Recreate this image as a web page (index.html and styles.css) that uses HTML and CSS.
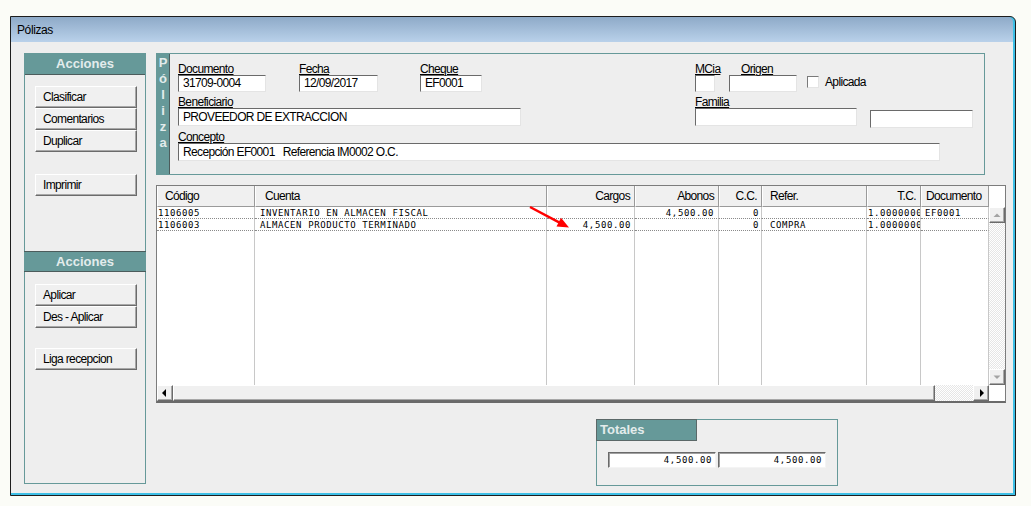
FILE: index.html
```html
<!DOCTYPE html>
<html lang="es">
<head>
  <meta charset="UTF-8" />
  <meta name="viewport" content="width=device-width, initial-scale=1.0"/>
  <title>Pólizas</title>
  <link rel="stylesheet" href="styles.css">
</head>
<body>
  <div class="window">
    <div class="titlebar">Pólizas</div>

    <div class="client">
      <!-- left action panel -->
      <div class="side">
        <div class="side-head">Acciones</div>
        <div class="btn-stack first">
          <button class="btn">Clasificar</button>
          <button class="btn">Comentarios</button>
          <button class="btn">Duplicar</button>
        </div>
        <div class="btn-stack solo">
          <button class="btn">Imprimir</button>
        </div>

        <div class="side-head second">Acciones</div>
        <div class="btn-stack after-head">
          <button class="btn">Aplicar</button>
          <button class="btn">Des - Aplicar</button>
        </div>
        <div class="btn-stack liga">
          <button class="btn">Liga recepcion</button>
        </div>
      </div>

      <div class="main">
        <!-- header of the voucher -->
        <div class="poliza">
          <div class="poliza-tab">
            <span>P</span><span>ó</span><span>l</span><span>i</span><span>z</span><span>a</span>
          </div>
          <div class="poliza-body">
            <div class="row row-1">
              <div class="field f-doc">
                <label>Documento</label>
                <div class="input">31709-0004</div>
              </div>
              <div class="field f-fecha">
                <label>Fecha</label>
                <div class="input">12/09/2017</div>
              </div>
              <div class="field f-cheque">
                <label>Cheque</label>
                <div class="input">EF0001</div>
              </div>
              <div class="field f-mcia">
                <label>MCia</label>
                <div class="input"></div>
              </div>
              <div class="field f-origen">
                <label>Origen</label>
                <div class="input"></div>
              </div>
              <div class="check">
                <span class="box"></span>
                <span>Aplicada</span>
              </div>
            </div>

            <div class="row row-2">
              <div class="field f-benef">
                <label>Beneficiario</label>
                <div class="input">PROVEEDOR DE EXTRACCION</div>
              </div>
              <div class="field f-familia">
                <label>Familia</label>
                <div class="input"></div>
              </div>
              <div class="field f-extra">
                <div class="input"></div>
              </div>
            </div>

            <div class="row row-3">
              <div class="field f-concepto">
                <label>Concepto</label>
                <div class="input">Recepción EF0001&nbsp;&nbsp; Referencia IM0002 O.C.</div>
              </div>
            </div>
          </div>
        </div>

        <!-- movements grid -->
        <div class="grid">
          <div class="grid-top">
            <div class="cols">
              <div class="hd">Código</div>
              <div class="hd hd-cuenta">Cuenta</div>
              <div class="hd right">Cargos</div>
              <div class="hd right">Abonos</div>
              <div class="hd right">C.C.</div>
              <div class="hd hd-refer">Refer.</div>
              <div class="hd right">T.C.</div>
              <div class="hd hd-doc">Documento</div>

              <div class="cell c-cod">1106005</div>
              <div class="cell c-cta">INVENTARIO EN ALMACEN FISCAL</div>
              <div class="cell c-num"></div>
              <div class="cell c-num c-abono">4,500.00</div>
              <div class="cell c-cc">0</div>
              <div class="cell c-ref"></div>
              <div class="cell c-tc">1.0000000</div>
              <div class="cell c-doc">EF0001</div>

              <div class="cell c-cod">1106003</div>
              <div class="cell c-cta">ALMACEN PRODUCTO TERMINADO</div>
              <div class="cell c-num">4,500.00</div>
              <div class="cell c-num c-abono"></div>
              <div class="cell c-cc">0</div>
              <div class="cell c-ref">COMPRA</div>
              <div class="cell c-tc">1.0000000</div>
              <div class="cell c-doc"></div>

              <div class="fill"></div><div class="fill"></div><div class="fill"></div><div class="fill"></div>
              <div class="fill"></div><div class="fill"></div><div class="fill"></div><div class="fill"></div>
            </div>

            <div class="vscroll">
              <div class="sbtn">
                <svg width="14" height="14"><polygon points="3.5,9 10.5,9 7,5.5" fill="#a3a3a3"/></svg>
              </div>
              <div class="track"></div>
              <div class="sbtn">
                <svg width="14" height="14"><polygon points="3.5,5.5 10.5,5.5 7,9" fill="#a3a3a3"/></svg>
              </div>
            </div>
          </div>

          <div class="hscroll">
            <div class="sbtn">
              <svg width="14" height="14"><polygon points="8,3 8,11 4,7" fill="#000"/></svg>
            </div>
            <div class="thumb"></div>
            <div class="track"></div>
            <div class="sbtn">
              <svg width="14" height="14"><polygon points="6,3 6,11 10,7" fill="#000"/></svg>
            </div>
            <div class="corner"></div>
          </div>

          <svg class="arrow" width="46" height="28">
            <line x1="4" y1="4" x2="34" y2="19.8" stroke="#f00" stroke-width="2.5"/>
            <polygon points="43,24.5 30.5,23.5 35,14.8" fill="#f00"/>
          </svg>
        </div>

        <!-- totals -->
        <div class="totales">
          <div class="totales-head">Totales</div>
          <div class="totales-row">
            <div class="total">4,500.00</div>
            <div class="total">4,500.00</div>
          </div>
        </div>
      </div>
    </div>
  </div>
</body>
</html>
```

FILE: styles.css
```css
* {
  box-sizing: border-box;
}

body {
  margin: 0;
  background: #fbfcf7;
  font-family: "Liberation Sans", Arial, sans-serif;
  font-size: 12px;
  letter-spacing: -0.65px;
  color: #000;
}

/* window frame */
.window {
  width: 1006px;
  height: 480px;
  margin: 16px 0 0 10px;
  padding: 0 2px 2px 0;
  background: #3dbfe6;
  border: 1px solid #1d1d1d;
  border-top-right-radius: 6px;
  display: flex;
  flex-direction: column;
}

.titlebar {
  height: 25px;
  padding: 2px 0 0 6px;
  line-height: 23px;
  background: linear-gradient(#8eaac8, #b9d1ea);
  border-top-right-radius: 5px;
  letter-spacing: -0.4px;
}

.client {
  flex: 1;
  background: #eeeeee;
  display: flex;
  align-items: flex-start;
  gap: 10px;
  padding: 11px 0 0 13px;
}

/* left panel */
.side {
  width: 122px;
  height: 431px;
  border: 1px solid #669999;
  display: flex;
  flex-direction: column;
}

.side-head {
  height: 21px;
  line-height: 20px;
  background: #669999;
  border-bottom: 1px solid #4c5c5c;
  color: #e3ecec;
  font-size: 13px;
  font-weight: bold;
  letter-spacing: 0;
  text-align: center;
}

.side-head.second {
  margin: 55px -1px 0;
  border-top: 1px solid #4c5c5c;
  line-height: 19px;
}

.btn-stack {
  display: flex;
  flex-direction: column;
  margin-left: 10px;
}

.btn-stack.first { margin-top: 11px; }
.btn-stack.solo { margin-top: 22px; }
.btn-stack.after-head { margin-top: 12px; }
.btn-stack.liga { margin-top: 20px; }

.btn {
  display: block;
  width: 102px;
  height: 22px;
  margin: 0;
  padding: 0 0 0 7px;
  font: inherit;
  letter-spacing: inherit;
  line-height: 20px;
  color: #000;
  text-align: left;
  background: #f0f0f0;
  border: 1px solid;
  border-color: #fff #6b6b6b #6b6b6b #fff;
  box-shadow: inset -1px -1px 0 #a8a8a8;
}

/* voucher header */
.main {
  width: 850px;
  display: flex;
  flex-direction: column;
}

.poliza {
  width: 829px;
  height: 122px;
  border: 1px solid #669999;
  display: flex;
}

.poliza-tab {
  width: 13px;
  padding-top: 1px;
  background: #669999;
  border-right: 1px solid #4c5c5c;
  color: #e3ecec;
  font-size: 13px;
  font-weight: bold;
  letter-spacing: 0;
  line-height: 16px;
  text-align: center;
}

.poliza-tab span {
  display: block;
}

.poliza-body {
  flex: 1;
  padding: 10px 0 0 8px;
}

.row {
  display: flex;
  align-items: flex-start;
}

.row-2 { margin-top: 5px; }
.row-3 { margin-top: 4px; }

.field label {
  display: block;
  height: 11px;
  line-height: 11px;
  text-decoration: underline;
  white-space: nowrap;
}

.input {
  height: 17px;
  padding-left: 4px;
  line-height: 15px;
  background: #fff;
  border: 1px solid;
  border-color: #6a6a6a #e4e4e4 #e4e4e4 #6a6a6a;
  white-space: nowrap;
  overflow: hidden;
}

.row-2 .input,
.row-3 .input {
  height: 18px;
  line-height: 16px;
}

.f-doc { width: 88px; }
.f-fecha { width: 79px; margin-left: 33px; }
.f-cheque { width: 62px; margin-left: 42px; }
.f-mcia { width: 20px; margin-left: 213px; }
.f-origen { width: 68px; margin-left: 14px; }
.f-origen label { padding-left: 12px; }
.f-benef { width: 343px; }
.f-familia { width: 162px; margin-left: 174px; }
.f-extra { width: 103px; margin: 13px 0 0 13px; }
.f-concepto { width: 762px; }

.check {
  display: flex;
  align-items: center;
  gap: 6px;
  height: 12px;
  margin: 12px 0 0 10px;
  line-height: 12px;
}

.check .box {
  width: 12px;
  height: 12px;
  background: #fff;
  border: 1px solid;
  border-color: #7a7a7a #e4e4e4 #e4e4e4 #7a7a7a;
}

/* movements grid */
.grid {
  position: relative;
  width: 850px;
  margin-top: 10px;
  background: #fff;
  border: 1px solid #7c7c7c;
  border-bottom: 2px solid #6a6a6a;
}

.grid-top {
  display: flex;
  height: 199px;
}

.cols {
  width: 832px;
  display: grid;
  grid-template-columns: 98px 292px 88px 84px 43px 105px 54px 68px;
  grid-template-rows: 21px 12px 12px 1fr;
}

.hd {
  padding: 0 0 0 7px;
  line-height: 20px;
  background: #f0f0f0;
  border-left: 1px solid #fff;
  border-right: 1px solid #9a9a9a;
  border-bottom: 1px solid #9a9a9a;
  white-space: nowrap;
  overflow: hidden;
}

.hd.right {
  padding: 0 4px 0 0;
  text-align: right;
}

.hd-cuenta { padding-left: 9px; }
.hd-doc { padding-left: 4px; }

.cell {
  padding: 0 4px;
  font-family: "DejaVu Sans Mono", monospace;
  font-size: 9px;
  letter-spacing: 0.6px;
  line-height: 12px;
  white-space: nowrap;
  border-right: 1px solid #c8c8c8;
  border-bottom: 1px dotted #8a8a8a;
}

.c-cod { padding-left: 1px; }
.c-cta { padding-left: 5px; }
.c-num { text-align: right; padding-right: 3px; }
.c-abono { padding-right: 4px; }
.c-cc { text-align: right; padding-right: 2px; }
.c-ref { padding-left: 8px; }
.c-tc { padding-left: 1px; overflow: hidden; }
.c-doc { padding-left: 4px; }

.fill {
  border-right: 1px solid #c8c8c8;
}

.vscroll {
  width: 16px;
  padding-top: 21px;
  display: flex;
  flex-direction: column;
}

.sbtn {
  width: 16px;
  height: 16px;
  flex: none;
  background: #f0f0f0;
  border: 1px solid;
  border-color: #fff #6b6b6b #6b6b6b #fff;
  box-shadow: inset -1px -1px 0 #a8a8a8;
}

.sbtn svg {
  display: block;
}

.track {
  flex: 1;
  background: repeating-conic-gradient(#e6e6e6 0 25%, #fff 0 50%) 0 0 / 2px 2px;
}

.hscroll {
  display: flex;
  height: 16px;
}

.thumb {
  width: 762px;
  background: #f0f0f0;
  border: 1px solid;
  border-color: #fff #6b6b6b #6b6b6b #fff;
  box-shadow: inset -1px -1px 0 #a8a8a8;
}

.corner {
  width: 16px;
  background: #fff;
}

.arrow {
  position: absolute;
  left: 369px;
  top: 17px;
}

/* totals */
.totales {
  width: 242px;
  height: 67px;
  margin: 16px 0 0 440px;
  border: 1px solid #669999;
}

.totales-head {
  width: 101px;
  height: 22px;
  margin: -1px 0 0 -1px;
  padding-left: 3px;
  line-height: 20px;
  background: #669999;
  border: 1px solid #5b6868;
  color: #e3ecec;
  font-size: 13px;
  font-weight: bold;
  letter-spacing: 0;
}

.totales-row {
  display: flex;
  gap: 2px;
  margin: 11px 0 0 11px;
}

.total {
  width: 108px;
  height: 16px;
  padding-right: 3px;
  text-align: right;
  font-family: "DejaVu Sans Mono", monospace;
  font-size: 9px;
  letter-spacing: 0.6px;
  line-height: 14px;
  background: #fff;
  border: 1px solid;
  border-color: #6a6a6a #f4f4f4 #f4f4f4 #6a6a6a;
  box-shadow: inset 1px 1px 0 #a0a0a0;
}
```
